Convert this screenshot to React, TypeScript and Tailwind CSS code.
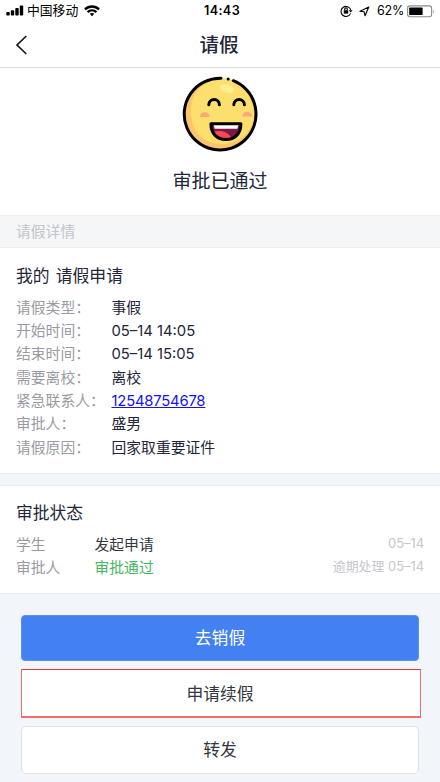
import type { ReactNode } from "react";

interface DetailItem { label: string; value: string; isPhone?: boolean; }
interface StepItem { role: string; status: string; note: string; passed?: boolean; }

const details: DetailItem[] = [
  { label: "请假类型：", value: "事假" },
  { label: "开始时间：", value: "05–14 14:05" },
  { label: "结束时间：", value: "05–14 15:05" },
  { label: "需要离校：", value: "离校" },
  { label: "紧急联系人：", value: "12548754678", isPhone: true },
  { label: "审批人：", value: "盛男" },
  { label: "请假原因：", value: "回家取重要证件" },
];

const steps: StepItem[] = [
  { role: "学生", status: "发起申请", note: "05–14" },
  { role: "审批人", status: "审批通过", note: "逾期处理 05–14", passed: true },
];

function StatusBar() {
  return (
    <div className="grid h-[22px] grid-cols-3 items-center pl-[6px] pr-[5px] text-black">
      <div className="flex items-center">
        <svg width="18" height="11" viewBox="0 0 18 11">
          <rect x="0.3" y="7" width="3.4" height="3.6" rx="0.8" />
          <rect x="4.8" y="5.2" width="3.4" height="5.4" rx="0.8" />
          <rect x="9.3" y="3" width="3.4" height="7.6" rx="0.8" />
          <rect x="13.8" y="0.4" width="3.4" height="10.2" rx="0.8" />
        </svg>
        <span className="ml-[3px] pt-px text-[12.8px] leading-none">中国移动</span>
        <svg className="ml-[6px]" width="16" height="12" viewBox="0 0 16 12" fill="none" stroke="#000" strokeWidth="2.4">
          <path d="M1 4.3C5 .5 11 .5 15 4.3" />
          <path d="M3.6 7.1c2.5-2.3 6.3-2.3 8.8 0" />
          <path d="M5.7 8.8c1.3-1.2 3.3-1.2 4.6 0L8 11.2z" fill="#000" stroke="none" />
        </svg>
      </div>
      <div className="pl-[3px] pt-px text-center text-[12.6px] font-semibold leading-none tracking-[0.4px]">14:43</div>
      <div className="flex items-center justify-end">
        <svg width="13" height="12" viewBox="0 0 13 12" fill="none" stroke="#000" strokeWidth="1.1">
          <path d="M10.6 8.4A5 5 0 1 1 10.8 5" />
          <path d="M8.8 5.2h3.8l-1.9 2.4z" fill="#000" stroke="none" />
          <rect x="3.8" y="5.2" width="4.4" height="3.4" fill="#000" stroke="none" />
          <path d="M4.7 5.3V4.2a1.3 1.3 0 0 1 2.6 0v1.1" />
        </svg>
        <svg className="ml-[6px] mr-px" width="11" height="11" viewBox="0 0 11 11" fill="none" stroke="#000" strokeWidth="1.1" strokeLinejoin="round">
          <path d="M9.800 1 .9 5.200l4.100.500 1 4z" />
        </svg>
        <span className="ml-[6px] pt-px text-[12.6px] leading-none tracking-[-0.3px]">62%</span>
        <svg className="ml-[3px]" width="28" height="13" viewBox="0 0 28 13">
          <rect x="0.6" y="0.9" width="24" height="10.8" rx="2.2" fill="none" stroke="#8b8b8b" strokeWidth="1.1" />
          <rect x="2.2" y="2.6" width="13.4" height="7.5" rx="0.6" />
          <path d="M26 4.4q1.500 2 0 4z" fill="#8b8b8b" />
        </svg>
      </div>
    </div>
  );
}

function SmileFace() {
  return (
    <svg className="ml-[1px]" width="77" height="76" viewBox="-1 0 77 76" fill="none">
      <circle cx="37.500" cy="38" r="36" fill="#fbc56d" />
      <path d="M34 2.300C14 8 7 23 8 38c1 19 14 30 30 30 14 0 25-6 31.500-20A36 36 0 0 0 34 2.300z" fill="#fddf6d" />
      <ellipse cx="44" cy="12.500" rx="7.200" ry="4.200" transform="rotate(15 44 12.500)" fill="#fcee8e" />
      <path d="M17 41a4.800 4.800 0 0 1 9.600 0zM59.400 40.500a4.800 4.800 0 0 1 9.600 0z" fill="#f9a880" />
      <path d="M50.300 4.700A35.900 35.900 0 1 1 38 2.200" stroke="#000" strokeWidth="3" strokeLinecap="round" />
      <circle cx="45.200" cy="3" r="1.500" fill="#000" />
      <path d="M25.800 28.800a5.300 5.300 0 0 1 10.600 0M50.800 28.800a5.300 5.300 0 0 1 10.600 0" stroke="#000" strokeWidth="3" strokeLinecap="round" />
      <path d="M27.900 47.800h30c0 10-6 15.700-15 15.700s-15-5.700-15-15.700z" fill="#7d1848" />
      <path d="M31 56c7-2.500 14 0 17.500 6-7 3.500-14.500 1-17.500-6z" fill="#fc4755" />
      <path d="M30.500 48.500h25l-1.200 4.200H31.700z" fill="#fff" />
      <path d="M27.900 47.800h30c0 10-6 15.700-15 15.700s-15-5.700-15-15.700z" stroke="#000" strokeWidth="3" strokeLinejoin="round" />
    </svg>
  );
}

function SectionTitle({ children }: { children: ReactNode }) {
  return <h2 className="text-[16.8px] leading-6 text-[#23263a] [word-spacing:1.5px]">{children}</h2>;
}

export default function App() {
  return (
    <div lang="zh-CN" className="h-[782px] w-[440px] overflow-hidden bg-[#f2f6fb] font-[Inter,'Noto_Sans_CJK_SC',sans-serif] text-[#23263a]">
      <div className="h-[68px] border-b border-[#dcdcdc] bg-white">
        <StatusBar />
        <header className="grid h-[45px] grid-cols-3 items-center px-[15px]">
          <svg width="13" height="20" viewBox="0 0 13 20" fill="none" stroke="#111" strokeWidth="1.6">
            <path d="M11.300 1 2 10l9.300 9" />
          </svg>
          <h1 className="pr-[2px] pt-[2px] text-center text-[19.6px] font-medium leading-none">请假</h1>
        </header>
      </div>

      <section className="flex h-[147px] flex-col items-center bg-white pt-2">
        <SmileFace />
        <p className="mt-[16px] text-[19px] leading-7">审批已通过</p>
      </section>

      <div className="flex h-[33px] items-center border-y border-[#ebecee] bg-[#f5f6f8] px-4 pt-[2px] text-[14.8px] text-[#c3c4c9]">请假详情</div>

      <section className="h-[226px] border-b border-[#e9ecef] bg-white px-4 pt-[16px]">
        <SectionTitle>我的 请假申请</SectionTitle>
        <dl className="mt-[8.500px] text-[14.8px] leading-[23.400px]">
          {details.map((item) => (
            <div key={item.label} className="flex h-[23.400px] whitespace-nowrap">
              <dt className="w-[95.500px] shrink-0 text-[#999ba3]">{item.label}</dt>
              <dd>
                {item.isPhone ? <a href={`tel:${item.value}`} className="tracking-[-0.2px] text-[#1414f0] underline">{item.value}</a> : item.value}
              </dd>
            </div>
          ))}
        </dl>
      </section>

      <section className="mt-[11px] h-[109px] border-y border-[#e9ecef] bg-white px-4 pt-[15px]">
        <SectionTitle>审批状态</SectionTitle>
        <div className="mt-[9px] text-[14.8px]">
          {steps.map((step) => (
            <div key={step.role} className="flex h-[23.400px] items-center leading-[23.400px]">
              <span className="w-[78.500px] text-[#999ba3]">{step.role}</span>
              <span className={step.passed ? "text-[#43b75d]" : "text-[#33363f]"}>{step.status}</span>
              <span className="-mt-[4px] ml-auto text-[12.900px] text-[#c6c7cc]">{step.note}</span>
            </div>
          ))}
        </div>
      </section>

      <div className="flex flex-col pl-[21px] pr-[20px] pt-[21px] text-[16.800px] text-[#33363f]">
        <button className="mr-[1px] h-[46px] rounded-[4px] border border-[#5a91f5] bg-[#4381f3] pt-[2px] text-white">去销假</button>
        <button className="mt-2 -mr-px h-[49px] border border-b-2 border-[#f26d6d] border-t-[#e03a3a] bg-white pr-[2px] pt-[3px]">申请续假</button>
        <button className="mr-[1px] mt-2 h-[48px] rounded-[5px] border border-[#e0e1e5] bg-white pt-[2px]">转发</button>
      </div>
    </div>
  );
}
